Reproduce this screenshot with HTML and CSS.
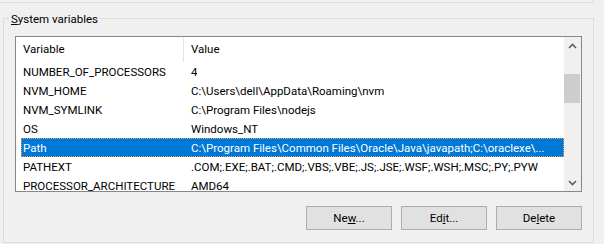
FILE: index.html
```html
<!DOCTYPE html>
<html>
<head>
<meta charset="utf-8">
<link rel="stylesheet" href="styles.css">
</head>
<body>
<div class="prev"></div>
<div class="group">
  <div class="legend"><u>S</u>ystem variables</div>
  <div class="list">
    <div class="table">
      <div class="header">
        <div class="hcell first">Variable</div>
        <div class="hcell">Value</div>
      </div>
      <div class="row"><div class="c1">NUMBER_OF_PROCESSORS</div><div class="c2">4</div></div>
      <div class="row"><div class="c1">NVM_HOME</div><div class="c2">C:\Users\dell\AppData\Roaming\nvm</div></div>
      <div class="row"><div class="c1">NVM_SYMLINK</div><div class="c2">C:\Program Files\nodejs</div></div>
      <div class="row"><div class="c1">OS</div><div class="c2">Windows_NT</div></div>
      <div class="row sel"><div class="c1">Path</div><div class="c2">C:\Program Files\Common Files\Oracle\Java\javapath;C:\oraclexe\...</div></div>
      <div class="row"><div class="c1">PATHEXT</div><div class="c2">.COM;.EXE;.BAT;.CMD;.VBS;.VBE;.JS;.JSE;.WSF;.WSH;.MSC;.PY;.PYW</div></div>
      <div class="row"><div class="c1">PROCESSOR_ARCHITECTURE</div><div class="c2">AMD64</div></div>
    </div>
    <div class="scrollbar">
      <div class="arrow">
        <svg width="9" height="6" viewBox="0 0 9 6"><path d="M1 5 L4.5 1.5 L8 5" fill="none" stroke="#606060" stroke-width="1.6"/></svg>
      </div>
      <div class="track"><div class="thumb"></div></div>
      <div class="arrow">
        <svg width="9" height="6" viewBox="0 0 9 6"><path d="M1 1 L4.5 4.5 L8 1" fill="none" stroke="#606060" stroke-width="1.6"/></svg>
      </div>
    </div>
  </div>
  <div class="buttons">
    <div class="btn">Ne<u>w</u>...</div>
    <div class="btn">Ed<u>i</u>t...</div>
    <div class="btn">De<u>l</u>ete</div>
  </div>
</div>
</body>
</html>
```
FILE: styles.css
```css
html, body {
  margin: 0;
  padding: 0;
  background: #f0f0f0;
  width: 604px;
  height: 244px;
  overflow: hidden;
}
body {
  font-family: Roboto, "Liberation Sans", sans-serif;
  font-size: 11.5px;
  color: #000;
}
.prev {
  width: 593px;
  height: 2px;
  border-bottom: 1px solid #dcdcdc;
  border-right: 1px solid #dcdcdc;
}
.group {
  position: relative;
  margin: 15px 0 0 3px;
  width: 589px;
  height: 223px;
  border: 1px solid #dcdcdc;
}
.legend {
  position: absolute;
  left: 5px;
  top: -8px;
  padding: 0 2px;
  background: #f0f0f0;
  line-height: 16px;
}
.list {
  margin: 17px 0 0 11px;
  width: 565px;
  height: 154px;
  border: 1px solid #828790;
  background: #fff;
  display: flex;
}
.table {
  width: 548px;
  overflow: hidden;
}
.header {
  display: flex;
  height: 25px;
  line-height: 25px;
}
.hcell {
  padding-left: 7px;
}
.hcell.first {
  width: 160px;
  border-right: 1px solid #e5e5e5;
}
.row {
  display: flex;
  margin-left: 5px;
  height: 19px;
  line-height: 20px;
  white-space: nowrap;
}
.c1 {
  width: 168px;
  padding-left: 2px;
  flex: none;
}
.c2 {
  overflow: hidden;
}
.row.sel {
  background: #0078d7;
  color: #fff;
  outline: 1px dotted #f0a050;
  outline-offset: -1px;
}
.scrollbar {
  width: 17px;
  background: #f0f0f0;
  display: flex;
  flex-direction: column;
}
.arrow {
  height: 17px;
  display: flex;
  align-items: center;
  justify-content: center;
}
.track {
  flex: 1;
  padding-top: 20px;
}
.thumb {
  width: 16px;
  height: 29px;
  background: #cdcdcd;
}
.buttons {
  margin: 14px 0 0 11px;
  width: 567px;
  display: flex;
  justify-content: flex-end;
  gap: 9px;
}
.btn {
  width: 84px;
  height: 22px;
  line-height: 23px;
  border: 1px solid #adadad;
  background: #e1e1e1;
  text-align: center;
}
```
